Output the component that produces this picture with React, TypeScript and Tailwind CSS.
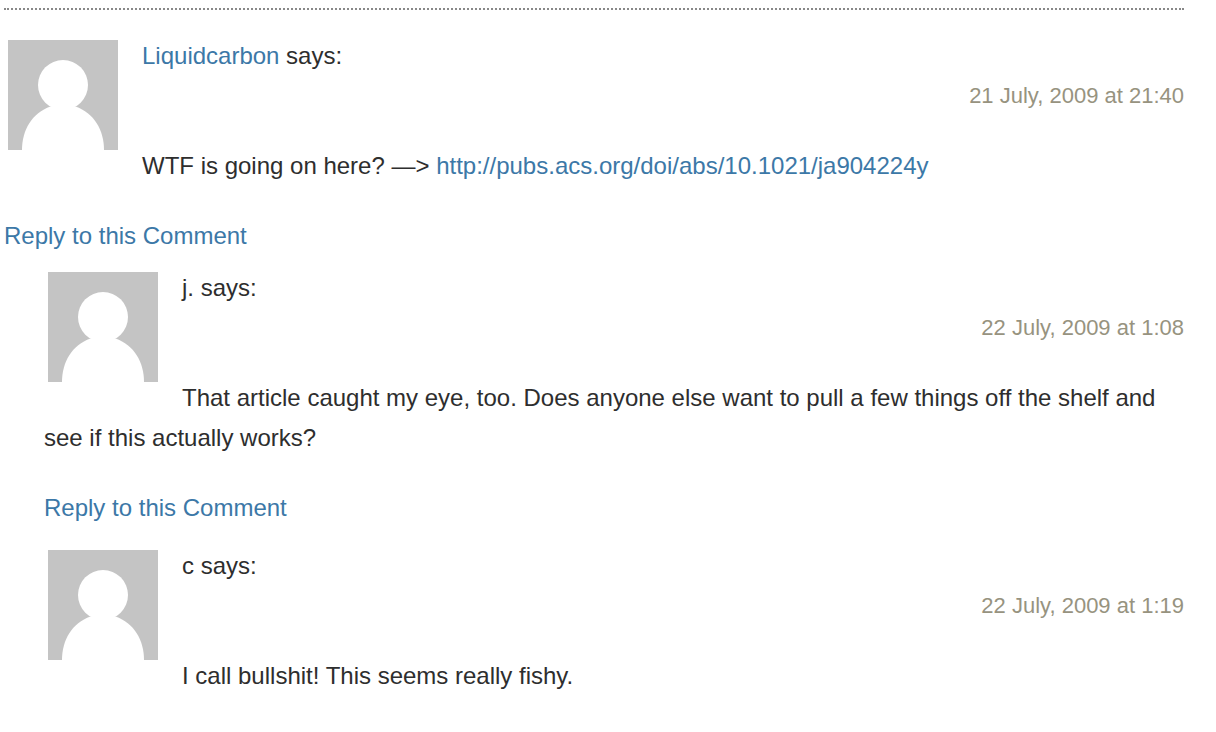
import type { ReactNode } from 'react';

type CommentProps = {
  author: ReactNode;
  date: string;
  children: ReactNode;
  canReply?: boolean;
};

const linkClass = 'text-[#3c78a7] hover:underline';

function Avatar() {
  return (
    <svg
      viewBox="0 0 110 110"
      role="img"
      aria-label="Avatar"
      className="float-left mt-1 mr-6 mb-1 ml-1 size-[110px] bg-[#c4c4c4]"
    >
      <circle cx="55" cy="45" r="25" fill="#fff" />
      <path d="M14 110C14 90 24 73 42.500 66.500H67.500C86 73 96 90 96 110Z" fill="#fff" />
    </svg>
  );
}

function Comment({ author, date, children, canReply = true }: CommentProps) {
  return (
    <article>
      <Avatar />
      <p>{author} says:</p>
      <p className="text-right text-[22px] text-[#97937f]">{date}</p>
      <p className="mt-[30px]">{children}</p>
      {canReply && (
        <p className="mt-[30px] clear-left">
          <a href="#respond" className={linkClass}>Reply to this Comment</a>
        </p>
      )}
    </article>
  );
}

export default function App() {
  return (
    <main className="bg-white pt-2 pr-8 pb-9 pl-1 font-['Liberation_Sans',Arial,sans-serif] text-[24px] leading-10 text-[#2e2e2e]">
      <ol className="border-t-2 border-dotted border-[#888888] pt-[26px]">
        <li>
          <Comment
            author={<a href="#liquidcarbon" className={linkClass}>Liquidcarbon</a>}
            date="21 July, 2009 at 21:40"
          >
            WTF is going on here? —&gt;{' '}
            <a href="http://pubs.acs.org/doi/abs/10.1021/ja904224y" className={linkClass}>
              http://pubs.acs.org/doi/abs/10.1021/ja904224y
            </a>
          </Comment>

          {/* Replies */}
          <ol className="mt-3 space-y-[18px] pl-10">
            <li>
              <Comment author="j." date="22 July, 2009 at 1:08">
                That article caught my eye, too. Does anyone else want to pull a few things off the shelf and see if this actually works?
              </Comment>
            </li>
            <li>
              <Comment author="c" date="22 July, 2009 at 1:19" canReply={false}>
                I call bullshit! This seems really fishy.
              </Comment>
            </li>
          </ol>
        </li>
      </ol>
    </main>
  );
}
